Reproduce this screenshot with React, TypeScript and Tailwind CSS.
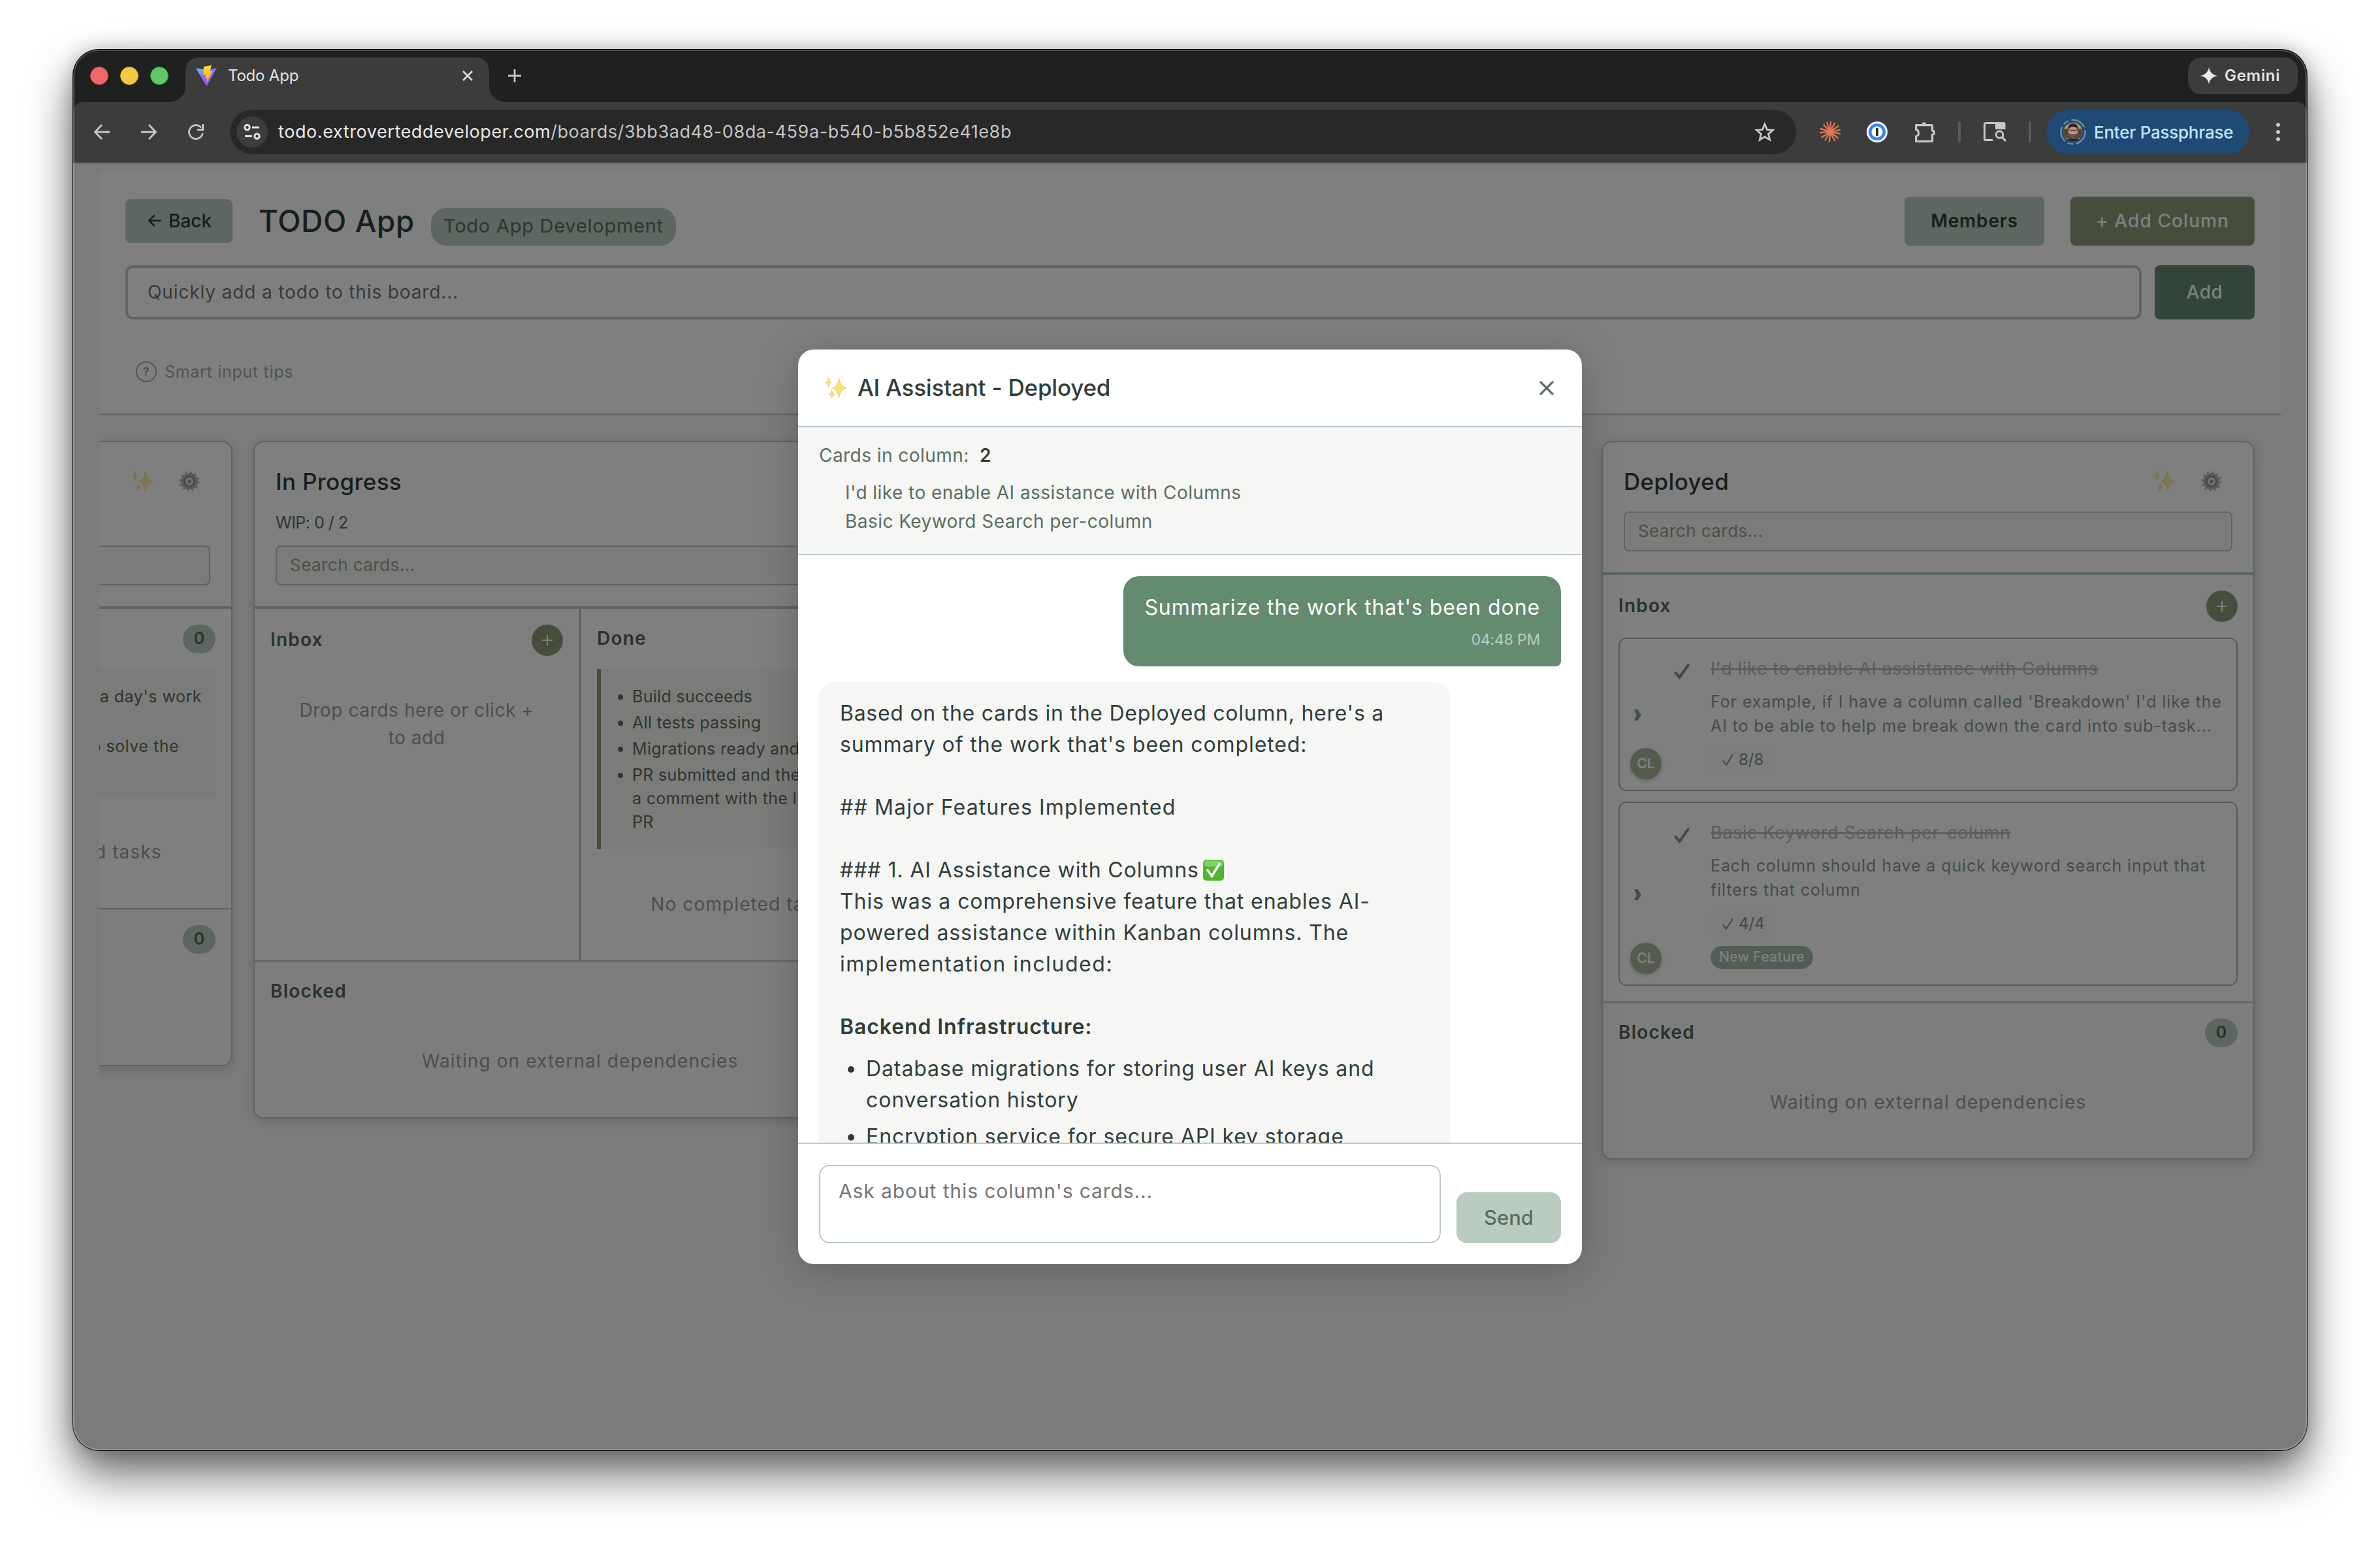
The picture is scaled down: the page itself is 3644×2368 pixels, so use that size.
import React from "react";
import { clsx } from "clsx";

const CONTEXT_CARDS = ["I'd like to enable AI assistance with Columns", "Basic Keyword Search per-column"];

const DONE_RULES = [
  ["Build succeeds"],
  ["All tests passing"],
  ["Migrations ready and"],
  ["PR submitted and the", "a comment with the l", "PR"],
];

export default function App() {
  return (
    <div className="flex h-[2368px] w-[3644px] bg-white pl-[112px] pt-[76px] font-['Inter',sans-serif]">
      <div className="relative flex h-[2144px] w-[3420px] flex-col overflow-hidden rounded-[40px] bg-[#1f2120] shadow-[0_0_0_1px_#000,0_36px_70px_rgba(0,0,0,0.6),0_0_30px_rgba(0,0,0,0.22)]">
        <TabStrip />
        <Toolbar />
        <div className="relative h-[1970px] overflow-hidden bg-[#f7f6f3]">
          <BoardPage />
          {/* Modal backdrop */}
          <div className="absolute inset-0 flex items-center justify-center bg-black/50">
            <AssistantModal />
          </div>
        </div>
        <div className="pointer-events-none absolute inset-0 rounded-[40px] border-2 border-white/20" />
      </div>
    </div>
  );
}

/* ---------- Browser chrome ---------- */

function TabStrip() {
  return (
    <div className="flex h-20 shrink-0 pl-[26px] pr-[14px]">
      <div className="flex items-center gap-[18px]">
        <span className="size-7 rounded-full border border-[#d8413d] bg-[#ee6868]" />
        <span className="size-7 rounded-full border border-[#d9a61e] bg-[#f4c945]" />
        <span className="size-7 rounded-full border border-[#2fa53a] bg-[#64c567]" />
      </div>
      <div className="relative ml-[26px] mt-3 flex h-[68px] w-[465px] items-center rounded-t-[20px] bg-[#3c3c3c] pb-[13px] pl-4 pr-[25px]">
        <svg className="absolute -left-6 bottom-0 size-6" viewBox="0 0 24 24">
          <path d="M24 0v24H0A24 24 0 0 0 24 0z" fill="#3c3c3c" />
        </svg>
        <svg className="absolute -right-6 bottom-0 size-6" viewBox="0 0 24 24">
          <path d="M0 0v24h24A24 24 0 0 1 0 0z" fill="#3c3c3c" />
        </svg>
        <ViteIcon />
        <span className="ml-[17px] text-[24px] leading-8 tracking-[-0.2px] text-[#e3e3e3]">Todo App</span>
        <svg className="ml-auto size-4" viewBox="0 0 16 16" stroke="#dcdcdc" strokeWidth="2.6">
          <path d="M1 1l14 14M15 1L1 15" />
        </svg>
      </div>
      <svg className="ml-[29px] mt-[30px] size-5" viewBox="0 0 20 20" stroke="#c7c7c7" strokeWidth="2.8">
        <path d="M10 0v20M0 10h20" />
      </svg>
      <div className="ml-auto mt-3 flex h-14 w-[168px] items-center rounded-[20px] bg-[#3c3c3c] pl-[19px]">
        <svg className="size-[26px]" viewBox="0 0 26 26" fill="#e9e9e9">
          <path d="M13 0c1.400 7.400 5.600 11.600 13 13-7.400 1.400-11.600 5.600-13 13-1.400-7.400-5.600-11.600-13-13C7.400 11.600 11.600 7.400 13 0z" />
        </svg>
        <span className="ml-[11px] text-[24px] font-semibold tracking-[0.7px] text-[#e3e3e3]">Gemini</span>
      </div>
    </div>
  );
}

function ViteIcon() {
  return (
    <svg className="h-8 w-8 shrink-0" viewBox="0 0 32 32">
      <defs>
        <linearGradient id="vite-bg" x1="0" y1="0" x2="0.7" y2="1">
          <stop offset="0" stopColor="#5cc8ff" />
          <stop offset="0.5" stopColor="#8a6cf5" />
          <stop offset="1" stopColor="#bd34fe" />
        </linearGradient>
        <linearGradient id="vite-bolt" x1="0" y1="0" x2="0" y2="1">
          <stop offset="0" stopColor="#ffdd35" />
          <stop offset="1" stopColor="#ffa800" />
        </linearGradient>
      </defs>
      <path d="M0 4.200l12 2 12-.6 8-1.400L16.200 32z" fill="url(#vite-bg)" />
      <path d="M11.800 2L23.800 0l-2.500 9.400 4.200-.8L16.400 27l1-8-3.400.6.900-5.200-3.400.6z" fill="url(#vite-bolt)" />
    </svg>
  );
}

function Toolbar() {
  return (
    <div className="flex h-[94px] shrink-0 items-center rounded-t-[16px] border-b-2 border-[#4a4a4a] bg-[#3c3c3c] pl-2">
      <NavButton>
        <path d="M24 12H2M12 1L1.500 12 12 23" />
      </NavButton>
      <NavButton>
        <path d="M0 12h22M12 1l10.500 11L12 23" />
      </NavButton>
      <NavButton>
        <path d="M22.300 14A10.500 10.500 0 1 1 20 5.300M22.600 0v8.600H14" />
      </NavButton>

      <div className="ml-4 flex h-[68px] w-[2398px] items-center rounded-full bg-[#282828] pl-[10px] pr-8">
        <div className="flex size-12 items-center justify-center rounded-full bg-[#3c3c3c]">
          <svg className="h-6 w-[26px]" viewBox="0 0 26 24" fill="none" stroke="#e3e3e3" strokeWidth="3">
            <circle cx="5.500" cy="5" r="3.700" />
            <path d="M13 5h11M2 18.500h11" />
            <circle cx="20.500" cy="18.500" r="3.700" />
          </svg>
        </div>
        <span className="ml-[16px] whitespace-nowrap text-[27px] tracking-[0.58px] text-[#e8e8e8]">
          todo.extroverteddeveloper.com<span className="text-[#c4c4c4]">/boards/3bb3ad48-08da-459a-b540-b5b852e41e8b</span>
        </span>
        <svg className="ml-auto size-8" viewBox="0 0 32 32" fill="none" stroke="#c7c7c7" strokeWidth="2.8">
          <path d="M16 4l3.500 8.400 9 .8-6.900 5.900 2.100 8.900L16 23.300 8.300 28l2.100-8.900-6.900-5.900 9-.8z" />
        </svg>
      </div>

      <div className="ml-4 flex w-[72px] justify-center">
        <svg className="size-8" viewBox="-16 -16 32 32" stroke="#d97757" strokeWidth="2.400" strokeLinecap="round">
          <path d="M0 0L1-15M0 0l7-13M0 0l12.500-9M0 0l15-3M0 0l15 2.500M0 0l12 9M0 0l7 13M0 0l-1 15M0 0l-7.500 12.500M0 0l-12.500 8M0 0l-15 1M0 0l-14-5M0 0l-9.500-11M0 0l-4.500-14" />
        </svg>
      </div>
      <div className="flex w-[72px] justify-center">
        <svg className="size-8" viewBox="0 0 32 32">
          <circle cx="16" cy="16" r="16" fill="#fff" />
          <circle cx="16" cy="16" r="10.800" fill="none" stroke="#3b82f6" strokeWidth="4.600" />
          <rect x="14" y="10" width="4" height="12" rx="1" fill="#1f2937" />
        </svg>
      </div>
      <div className="flex w-[76px] justify-center">
        <svg className="h-8 w-[34px]" viewBox="0 0 34 32" fill="none" stroke="#c7c7c7" strokeWidth="3.200">
          <path d="M2.600 5.600h23.800q1.200 0 1.200 1.200v7.200q2.800 0 2.800 3t-2.800 3v9q0 1.400-1.400 1.400H2.600v-7.600q4-1 4-5.200t-4-5.200z" strokeLinejoin="round" />
          <path d="M11.500 4.500a3.300 3.300 0 0 1 6.600 0z" fill="#c7c7c7" stroke="none" />
        </svg>
      </div>
      <div className="ml-[12px] h-8 w-1 rounded-full bg-[#5b5b5b]" />
      <div className="flex w-[104px] justify-center">
        <svg className="h-[30px] w-9" viewBox="0 0 36 30" fill="none" stroke="#c7c7c7" strokeWidth="3">
          <path d="M15 27.500H4.500q-2 0-2-2v-22q0-2 2-2H19" />
          <path d="M19 0h13q2.500 0 2.500 2.500V11H19z" fill="#c7c7c7" stroke="none" />
          <circle cx="25.500" cy="19" r="5.300" />
          <path d="M29.500 23l5.500 6" />
        </svg>
      </div>
      <div className="h-8 w-1 rounded-full bg-[#5b5b5b]" />
      <div className="ml-[24px] flex h-[68px] w-[310px] items-center rounded-full bg-[#1f4a75] pl-5">
        <svg className="size-10" viewBox="0 0 40 40">
          <clipPath id="avatar-clip">
            <circle cx="20" cy="20" r="14.500" />
          </clipPath>
          <circle cx="20" cy="20" r="18.500" fill="none" stroke="#6f8ca8" strokeWidth="2.400" strokeDasharray="24 4.500 9 4.500" />
          <g clipPath="url(#avatar-clip)">
            <rect width="40" height="40" fill="#a8935c" />
            <rect y="15" width="40" height="14" fill="#59462f" />
            <path d="M4 40q2-11 16-11t16 11z" fill="#252130" />
            <ellipse cx="20" cy="19.500" rx="7" ry="10" fill="#b9958c" />
            <path d="M12.500 18q-1-11 7.500-11t7.500 11q-1.500-6-7.500-6t-7.500 6z" fill="#33241f" />
            <path d="M13.500 22q6.500 3 13 0-.5 9-6.500 9t-6.500-9z" fill="#6e4b48" />
            <path d="M14.500 17.500h11" stroke="#4b3a3a" strokeWidth="1.600" />
          </g>
        </svg>
        <span className="ml-3 whitespace-nowrap text-[26px] font-medium tracking-[-0.25px] text-[#c4e4fc]">Enter Passphrase</span>
      </div>
      <div className="flex w-[88px] flex-col items-center gap-[5px]">
        <span className="size-[6px] rounded-full bg-[#c7c7c7]" />
        <span className="size-[6px] rounded-full bg-[#c7c7c7]" />
        <span className="size-[6px] rounded-full bg-[#c7c7c7]" />
      </div>
    </div>
  );
}

function NavButton({ children }: { children: React.ReactNode }) {
  return (
    <div className="flex w-[72px] justify-center">
      <svg className="size-6 overflow-visible" viewBox="0 0 24 24" fill="none" stroke="#c7c7c7" strokeWidth="2.800">
        {children}
      </svg>
    </div>
  );
}

/* ---------- Board ---------- */

function BoardPage() {
  return (
    <div className="px-10 pt-[11px]">
      {/* Header */}
      <div className="h-[374px] border-b-2 border-[#baccc0] bg-white px-10 pt-10">
        <div className="flex h-[75px] items-center">
          <div className="flex h-[67px] w-[164px] items-center justify-center whitespace-nowrap rounded-[8px] bg-[#baccc0] pb-[2px] text-[28px] font-medium text-[#2f3e3a]">
            ← Back
          </div>
          <h1 className="ml-[40px] whitespace-nowrap text-[46px] font-medium tracking-[0.6px] text-[#2f3e3a]">TODO App</h1>
          <span className="ml-[25px] mt-[17px] flex h-[58px] w-[375px] items-center justify-center whitespace-nowrap rounded-[24px] bg-[#baccc0] pb-[2px] text-[29px] tracking-[0.75px] text-[#5a6e60]">
            Todo App Development
          </span>
          <div className="ml-auto flex gap-10">
            <div className="flex h-[75px] w-[214px] items-center justify-center rounded-[8px] bg-[#baccc0] pb-[2px] text-[28px] font-semibold tracking-[0.8px] text-[#2f3e3a]">
              Members
            </div>
            <div className="flex h-[75px] w-[282px] items-center justify-center whitespace-nowrap rounded-[8px] bg-[#8f9b7a] pb-[2px] text-[28px] font-medium tracking-[1.1px] text-white">
              + Add Column
            </div>
          </div>
        </div>
        <div className="mt-[30px] flex gap-5">
          <div className="flex h-[83px] flex-1 items-center rounded-[12px] border-4 border-[#baccc0] pb-[2px] pl-[30px] text-[28px] tracking-[0.87px] text-[#757575]">
            Quickly add a todo to this board...
          </div>
          <div className="flex h-[83px] w-[153px] items-center justify-center rounded-[8px] bg-[#648a70] pb-[2px] text-[28px] font-medium tracking-[0.6px] text-white">
            Add
          </div>
        </div>
        <div className="mt-[64px] flex items-center pl-4 text-[25px] leading-8 tracking-[0.7px] text-[#a2a9a5]">
          <span className="flex size-8 items-center justify-center rounded-full border-2 border-[#a2a9a5] text-[18px] font-bold">?</span>
          <span className="ml-[12px]">Smart input tips</span>
        </div>
      </div>

      {/* Columns */}
      <div className="flex h-[1500px] items-start justify-end gap-8 overflow-hidden pr-10 pt-10">
        {/* Scrolled mostly out of view, only its right edge shows */}
        <Column wip=" " placeholder="">
          <SplitBody scrolled>
            <div className="h-[196px] border-l-[6px] border-[#8f9b7a] bg-[#f7f6f3] py-6 pr-[21px] text-right text-[25px] leading-9 tracking-[0.5px] text-[#5a6e60]">
              <p>t a day's work</p>
              <p className="mt-10 pr-[35px]">o solve the</p>
            </div>
          </SplitBody>
          <Blocked scrolled />
        </Column>

        <Column title="In Progress" wip="WIP: 0 / 2">
          <SplitBody>
            <ul className="flex flex-col gap-1 border-l-[6px] border-[#8f9b7a] bg-[#f7f6f3] py-6 text-[25px] leading-9 tracking-[0.3px] text-[#5a6e60]">
              {DONE_RULES.map((rule) => (
                <li key={rule[0]} className="flex pl-[26px]">
                  <span className="mt-[15px] size-2 shrink-0 rounded-full bg-[#5a6e60]" />
                  <div className="ml-[14px] whitespace-nowrap">
                    {rule.map((line) => (
                      <p key={line}>{line}</p>
                    ))}
                  </div>
                </li>
              ))}
            </ul>
          </SplitBody>
          <Blocked />
        </Column>

        {/* Lane covered by the assistant */}
        <div className="h-[1000px] w-[1000px] shrink-0" />

        <Column title="Deployed">
          <div className="p-6">
            <SectionHead label="Inbox" add />
            <div className="mt-6 flex flex-col gap-4">
              <TodoCard
                title="I'd like to enable AI assistance with Columns"
                lines={["For example, if I have a column called 'Breakdown' I'd like the", "AI to be able to help me break down the card into sub-task..."]}
                checks="8/8"
              />
              <TodoCard
                title="Basic Keyword Search per-column"
                lines={["Each column should have a quick keyword search input that", "filters that column"]}
                checks="4/4"
                tag="New Feature"
              />
            </div>
          </div>
          <Blocked />
        </Column>
      </div>
    </div>
  );
}

type ColumnProps = { title?: string; wip?: string; placeholder?: string; children: React.ReactNode };

function Column({ title, wip, placeholder = "Search cards...", children }: ColumnProps) {
  return (
    <section className="w-[1000px] shrink-0 overflow-hidden rounded-[16px] border-2 border-[#baccc0] bg-white shadow-[0_4px_16px_rgba(47,62,58,0.2)]">
      <div className="flex flex-col gap-[18px] border-b-4 border-[#baccc0] p-8">
        <div className="flex h-14 items-center gap-2">
          <h2 className="mr-auto text-[35px] font-medium tracking-[0.35px] text-[#2f3e3a]">{title}</h2>
          <div className="flex w-16 justify-center opacity-60">
            <Sparkles />
          </div>
          <div className="flex w-16 justify-center">
            <Gear />
          </div>
        </div>
        {wip && <p className="h-[34px] text-[25px] leading-[34px] tracking-[-0.5px] text-[#5a6e60]">{wip}</p>}
        <div className="flex h-[61px] items-center rounded-[8px] border-2 border-[#baccc0] bg-[#f7f6f3] pb-[2px] pl-5 text-[26px] tracking-[0.45px] text-[#9a9d99]">
          {placeholder}
        </div>
      </div>
      {children}
    </section>
  );
}

function SplitBody({ scrolled, children }: { scrolled?: boolean; children: React.ReactNode }) {
  return (
    <div className="flex">
      <div className="w-[500px] shrink-0 border-r-4 border-[#baccc0] p-6">
        {!scrolled && (
          <>
            <SectionHead label="Inbox" add />
            <p className="pt-[62px] text-center text-[28px] leading-[42px] tracking-[0.6px] text-[#9c9c9c]">
              Drop cards here or click +
              <br />
              to add
            </p>
          </>
        )}
      </div>
      <div className="flex-1 p-6 pb-[65px]">
        <SectionHead label={scrolled ? "" : "Done"} />
        <div className="mt-6">{children}</div>
        <p className="mt-[63px] text-center text-[28px] leading-[42px] tracking-[1.1px] text-[#9c9c9c]">No completed tasks</p>
      </div>
    </div>
  );
}

function SectionHead({ label, add }: { label: string; add?: boolean }) {
  return (
    <div className={clsx("flex items-center justify-between text-[28px] font-semibold text-[#526659]", add ? "h-12" : "h-11")}>
      <span className="pb-[2px] tracking-[1.2px]">{label}</span>
      {add ? (
        <span className="flex size-12 items-center justify-center rounded-full bg-[#8f9b7a]">
          <svg className="size-4" viewBox="0 0 16 16" stroke="#fff" strokeWidth="2">
            <path d="M8 0v16M0 8h16" />
          </svg>
        </span>
      ) : (
        <span className="flex h-11 w-[50px] items-center justify-center rounded-[22px] bg-[#baccc0] text-[25px]">0</span>
      )}
    </div>
  );
}

function Blocked({ scrolled }: { scrolled?: boolean }) {
  return (
    <div className="border-t-2 border-[#baccc0] bg-[#fafafa] p-6 pb-[65px]">
      <SectionHead label={scrolled ? "" : "Blocked"} />
      <p className="mt-[63px] h-[42px] text-center text-[28px] leading-[42px] tracking-[1.1px] text-[#9c9c9c]">
        {!scrolled && "Waiting on external dependencies"}
      </p>
    </div>
  );
}

function TodoCard({ title, lines, checks, tag }: { title: string; lines: string[]; checks: string; tag?: string }) {
  return (
    <article className="relative flex rounded-[12px] border-2 border-[#a9bdb0] bg-white pb-6 pt-[26px]">
      <div className="flex w-[83px] items-center pl-[22px]">
        <svg className="h-[17px] w-[11px]" viewBox="0 0 11 17" fill="#86a593">
          <path d="M0 0h5.500L11 8.500 5.500 17H0l3.500-8.500z" />
        </svg>
      </div>
      <svg className="mt-[12px] h-6 w-6 shrink-0" viewBox="0 0 24 24" fill="none" stroke="#7c9a86" strokeWidth="4" strokeLinecap="round">
        <path d="M2.500 14l6 7L21.500 2.500" />
      </svg>
      <div className="ml-[32px] flex flex-col items-start whitespace-nowrap">
        <h3 className="text-[27px] leading-10 tracking-[0.62px] text-[#b9bbb9] line-through decoration-[3px]">{title}</h3>
        <div className="mt-3 text-[25px] leading-[36.500px] tracking-[0.9px] text-[#8b9992]">
          {lines.map((line) => (
            <p key={line}>{line}</p>
          ))}
        </div>
        <div className="mt-3 flex h-11 w-[97px] items-center gap-2 rounded-[8px] bg-[#fafafa] pl-[18px] text-[24px] text-[#83908a]">
          <svg className="h-[18px] w-[17px]" viewBox="0 0 17 18" fill="none" stroke="#83908a" strokeWidth="2">
            <path d="M1 10l5 7L16 1" />
          </svg>
          {checks}
        </div>
        {tag && (
          <span className="mt-3 flex h-[35px] w-[157px] items-center justify-center rounded-full bg-[#a4bbad] pb-[2px] text-[21px] font-medium tracking-[0.4px] text-white">
            {tag}
          </span>
        )}
      </div>
      <span className="absolute bottom-4 left-4 flex size-12 items-center justify-center rounded-full bg-[#adb99b] text-[21px] font-semibold text-white shadow-[0_2px_6px_rgba(0,0,0,0.2)]">
        CL
      </span>
    </article>
  );
}

function Sparkles() {
  return (
    <svg className="h-8 w-8" viewBox="0 0 32 32">
      <g fill="#fde26a" stroke="#f3b96a" strokeWidth="0.800">
        <path d="M20.500 1q1.500 12 11 15-9.500 3-11 15-1.500-12-10-15 8.500-3 10-15z" />
        <path d="M4.500 0.500q.7 5.500 4 7-3.300 1.500-4 7-.7-5.500-4-7 3.300-1.500 4-7z" />
        <path d="M9.500 19.500q.7 4.500 4.500 6-3.800 1.500-4.500 6-.7-4.500-4.200-6 3.500-1.500 4.200-6z" />
      </g>
    </svg>
  );
}

function Gear() {
  return (
    <svg className="h-8 w-8" viewBox="-16 -16 32 32" fill="none">
      <circle r="13.800" stroke="#bcc0c6" strokeWidth="3.600" strokeDasharray="3.400 3.825" />
      <circle r="9" stroke="#aeb1b7" strokeWidth="7" />
      <circle r="7.500" stroke="#82858a" strokeWidth="1.600" />
      <circle r="3.600" fill="#9a9da2" stroke="#d8dbe0" strokeWidth="1.800" />
    </svg>
  );
}

/* ---------- Assistant dialog ---------- */

function AssistantModal() {
  return (
    <div className="flex h-[1400px] w-[1200px] flex-col overflow-hidden rounded-[24px] bg-white text-[#2f3e3a] shadow-[0_8px_64px_rgba(0,0,0,0.2)]">
      <div className="flex h-[119px] shrink-0 items-center border-b-2 border-[#baccc0] pl-[42px] pr-[43px]">
        <Sparkles />
        <h2 className="ml-[17px] text-[35px] font-medium tracking-[-0.2px]">AI Assistant - Deployed</h2>
        <svg className="ml-auto size-[22px]" viewBox="0 0 22 22" stroke="#5a6e60" strokeWidth="3.200">
          <path d="M1 1l20 20M21 1L1 21" />
        </svg>
      </div>

      <div className="h-[196px] shrink-0 border-b-2 border-[#baccc0] bg-[#f6f6f4] px-8 pt-6 text-[28px] tracking-[0.45px] text-[#5a6e60]">
        <p className="leading-[38px]">
          Cards in column: <span className="ml-2 font-semibold text-[#2f3e3a]">2</span>
        </p>
        <div className="mt-4 pl-[40px] leading-[44px]">
          {CONTEXT_CARDS.map((card) => (
            <p key={card}>{card}</p>
          ))}
        </div>
      </div>

      <div className="flex min-h-0 flex-1 flex-col gap-6 overflow-hidden px-8 pt-8 text-[32px] leading-[48px] tracking-[0.9px]">
        <div className="w-[670px] shrink-0 self-end rounded-[24px] rounded-br-[8px] bg-[#648a70] px-8 py-6 text-right text-white">
          <p className="whitespace-nowrap">Summarize the work that's been done</p>
          <p className="mt-2 text-[23px] leading-[34px] tracking-[-0.2px] text-[#b9ccbf]">04:48 PM</p>
        </div>
        <div className="w-[966px] shrink-0 whitespace-nowrap rounded-[24px] rounded-bl-[8px] bg-[#f6f6f4] px-8 py-6">
          <p className="tracking-[0.73px]">Based on the cards in the Deployed column, here's a</p>
          <p>summary of the work that's been completed:</p>
          <p className="mt-12 tracking-[1.150px]">## Major Features Implemented</p>
          <p className="mt-12 flex items-center">
            <span>### 1. AI Assistance with Columns</span>
            <CheckEmoji />
          </p>
          <p>This was a comprehensive feature that enables AI-</p>
          <p>powered assistance within Kanban columns. The</p>
          <p className="tracking-[1.6px]">implementation included:</p>
          <p className="mt-12 font-semibold">Backend Infrastructure:</p>
          <ul className="mt-4 flex flex-col gap-2">
            <Bullet lines={["Database migrations for storing user AI keys and", "conversation history"]} />
            <Bullet lines={["Encryption service for secure API key storage"]} />
          </ul>
        </div>
      </div>

      <div className="flex h-[186px] shrink-0 items-end gap-6 border-t-2 border-[#baccc0] px-8 pb-8">
        <div className="h-[120px] w-[952px] rounded-[16px] border-2 border-[#baccc0] pl-[28px] pt-[14px] text-[30px] leading-[48px] tracking-[0.9px] text-[#757575]">
          Ask about this column's cards...
        </div>
        <div className="flex h-[78px] w-40 items-center justify-center rounded-[16px] bg-[#baccc0] text-[31px] font-medium text-[#5a6e60]">
          Send
        </div>
      </div>
    </div>
  );
}

function Bullet({ lines }: { lines: string[] }) {
  return (
    <li className="flex pl-3">
      <span className="mt-[20px] size-[10px] shrink-0 rounded-full bg-[#2f3e3a]" />
      <div className="ml-[18px]">
        {lines.map((line) => (
          <p key={line}>{line}</p>
        ))}
      </div>
    </li>
  );
}

function CheckEmoji() {
  return (
    <svg className="ml-[6px] h-8 w-8" viewBox="0 0 32 32">
      <rect width="32" height="32" rx="5" fill="#52b531" />
      <rect x="1.500" y="1.500" width="29" height="9" rx="4" fill="#7fd06a" />
      <path d="M7 16l6.500 9L25 6.500" fill="none" stroke="#fff" strokeWidth="3.600" strokeLinecap="round" />
    </svg>
  );
}
